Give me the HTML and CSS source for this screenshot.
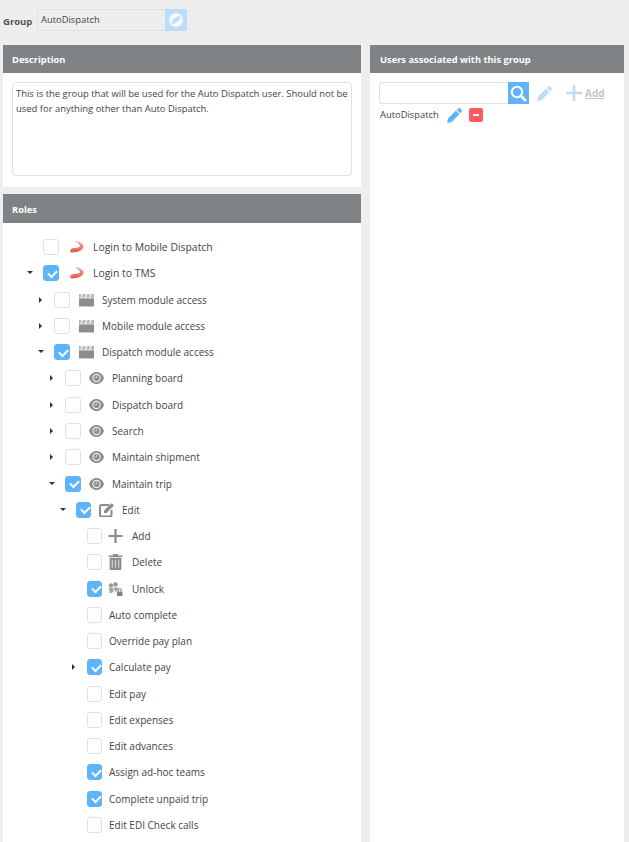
FILE: index.html
```html
<!DOCTYPE html>
<html lang="en">
<head>
<meta charset="utf-8">
<title>Group</title>
<link rel="stylesheet" href="styles.css">
</head>
<body>
<svg class="defs" width="0" height="0">
  <defs>
    <linearGradient id="g-swoosh" x1="0" y1="0" x2="0" y2="1"><stop offset="0" stop-color="#f6a79e"/><stop offset="1" stop-color="#e8554a"/></linearGradient>
    <symbol id="i-swoosh" viewBox="0 0 14 12"><path d="M5 .5C9 1 13.500 2.500 13.500 5.500 13.500 8.800 8.500 11.300 1.500 11 .8 10 1 8.200 2.500 7.500 5.500 6.300 9.800 7 10.200 5.300 10.400 3.800 8 2 5 .5z" fill="url(#g-swoosh)"/></symbol>
    <symbol id="i-clap" viewBox="0 0 14 12"><path d="M0 4.500h14V12H0z" fill="#8c8c8c"/><path d="M0 .5h14v3.300H0z" fill="#b0b0b0"/><path d="M2 .5h2L3 3.800H1zM6 .5h2L7 3.800H5zM10 .5h2l-1 3.300H9z" fill="#e6e6e6"/></symbol>
    <symbol id="i-eye" viewBox="0 0 15 12"><path d="M7.500 0C3.900 0 1.200 2.400 0 6c1.200 3.600 3.900 6 7.500 6s6.300-2.400 7.500-6C13.800 2.400 11.100 0 7.500 0z" fill="#8c8c8c"/><circle cx="7.500" cy="6" r="4.200" fill="#eee"/><circle cx="7.500" cy="6" r="3" fill="#8c8c8c"/><path d="M7.500 3.800v2.200H5.500" stroke="#ddd" fill="none" stroke-width=".8"/></symbol>
    <symbol id="i-edit" viewBox="0 0 15 14"><path d="M10 2H2.500C1.600 2 1 2.600 1 3.500v8.500c0 .9.600 1.500 1.500 1.500H11c.9 0 1.500-.6 1.500-1.500V7" fill="none" stroke="#8c8c8c" stroke-width="2"/><path d="M5 7.500 11.800.7a1 1 0 0 1 1.400 0l1.100 1.100a1 1 0 0 1 0 1.400L7.500 10H5z" fill="#8c8c8c"/></symbol>
    <symbol id="i-plus" viewBox="0 0 15 15"><path d="M6.300 0h2.400v6.300H15v2.400H8.700V15H6.300V8.700H0V6.300h6.300z" fill="currentColor"/></symbol>
    <symbol id="i-trash" viewBox="0 0 13 15"><path d="M4.500 0h4l.6 1.300H13v1.400H0V1.300h3.900zM1 3.500h11V14a1 1 0 0 1-1 1H2a1 1 0 0 1-1-1z" fill="#8c8c8c"/><path d="M3.500 5.500v7.500M6.500 5.500v7.500M9.500 5.500v7.500" stroke="#ddd" stroke-width="1"/></symbol>
    <symbol id="i-unlock" viewBox="0 0 15 14"><circle cx="3" cy="3.500" r="2.200" fill="#999"/><circle cx="7.500" cy="2.500" r="2.200" fill="#999"/><path d="M.5 6h5v3.500L4 11H2zM5.500 5.500h5L9 9.500H7z" fill="#a5a5a5"/><path d="M9 9.500h5.500V14H9z" fill="#808080"/><path d="M10.300 9.500V8a1.400 1.400 0 0 1 2.900 0v1.500" fill="none" stroke="#808080"/></symbol>
    <symbol id="i-pencil" viewBox="0 0 15 15"><path d="M10.800.8a2 2 0 0 1 2.800 0l.6.6a2 2 0 0 1 0 2.800l-1 1L9.800 1.800zM9 2.600 12.400 6l-7 7.500c-1.500 1-3.500 1.400-5.200 1.400C.3 13 .7 11 1.700 9.700z" fill="currentColor"/></symbol>
  </defs>
</svg>

<div class="group-row">
  <label class="group-label">Group</label>
  <div class="group-field">
    <span class="group-value">AutoDispatch</span>
    <span class="group-btn">
      <svg width="16" height="16" viewBox="0 0 16 16"><circle cx="8" cy="8" r="7" fill="#fff" fill-opacity=".8"/><path d="M12 4C12.500 7.500 9.500 11 4 12 3.500 8.500 6.500 5 12 4z" fill="#bddcf7"/></svg>
    </span>
  </div>
</div>

<div class="columns">
  <div class="col-left">
    <section class="panel panel-desc">
      <h2 class="panel-title">Description</h2>
      <div class="panel-body desc-body">
        <div class="desc-box">This is the group that will be used for the Auto Dispatch user. Should not be used for anything other than Auto Dispatch.</div>
      </div>
    </section>
    <section class="panel panel-roles">
      <h2 class="panel-title">Roles</h2>
      <div class="tree">
        <div class="row lvl0"><span class="arrow"></span><span class="cb"></span><svg class="ic ic-0"><use href="#i-swoosh"/></svg><span class="txt">Login to Mobile Dispatch</span></div>
        <div class="row lvl0"><span class="arrow open"></span><span class="cb on"></span><svg class="ic ic-0"><use href="#i-swoosh"/></svg><span class="txt">Login to TMS</span></div>
        <div class="row lvl1"><span class="arrow closed"></span><span class="cb"></span><svg class="ic ic-1"><use href="#i-clap"/></svg><span class="txt">System module access</span></div>
        <div class="row lvl1"><span class="arrow closed"></span><span class="cb"></span><svg class="ic ic-1"><use href="#i-clap"/></svg><span class="txt">Mobile module access</span></div>
        <div class="row lvl1"><span class="arrow open"></span><span class="cb on"></span><svg class="ic ic-1"><use href="#i-clap"/></svg><span class="txt">Dispatch module access</span></div>
        <div class="row lvl2"><span class="arrow closed"></span><span class="cb"></span><svg class="ic ic-2"><use href="#i-eye"/></svg><span class="txt">Planning board</span></div>
        <div class="row lvl2"><span class="arrow closed"></span><span class="cb"></span><svg class="ic ic-2"><use href="#i-eye"/></svg><span class="txt">Dispatch board</span></div>
        <div class="row lvl2"><span class="arrow closed"></span><span class="cb"></span><svg class="ic ic-2"><use href="#i-eye"/></svg><span class="txt">Search</span></div>
        <div class="row lvl2"><span class="arrow closed"></span><span class="cb"></span><svg class="ic ic-2"><use href="#i-eye"/></svg><span class="txt">Maintain shipment</span></div>
        <div class="row lvl2"><span class="arrow open"></span><span class="cb on"></span><svg class="ic ic-2"><use href="#i-eye"/></svg><span class="txt">Maintain trip</span></div>
        <div class="row lvl3"><span class="arrow open"></span><span class="cb on"></span><svg class="ic ic-3"><use href="#i-edit"/></svg><span class="txt">Edit</span></div>
        <div class="row lvl4"><span class="arrow"></span><span class="cb"></span><svg class="ic ic-4 ic-plus"><use href="#i-plus"/></svg><span class="txt">Add</span></div>
        <div class="row lvl4"><span class="arrow"></span><span class="cb"></span><svg class="ic ic-4 ic-tall"><use href="#i-trash"/></svg><span class="txt">Delete</span></div>
        <div class="row lvl4"><span class="arrow"></span><span class="cb on"></span><svg class="ic ic-4"><use href="#i-unlock"/></svg><span class="txt">Unlock</span></div>
        <div class="row lvl4"><span class="arrow"></span><span class="cb"></span><span class="txt plain">Auto complete</span></div>
        <div class="row lvl4"><span class="arrow"></span><span class="cb"></span><span class="txt plain">Override pay plan</span></div>
        <div class="row lvl4"><span class="arrow closed"></span><span class="cb on"></span><span class="txt plain">Calculate pay</span></div>
        <div class="row lvl4"><span class="arrow"></span><span class="cb"></span><span class="txt plain">Edit pay</span></div>
        <div class="row lvl4"><span class="arrow"></span><span class="cb"></span><span class="txt plain">Edit expenses</span></div>
        <div class="row lvl4"><span class="arrow"></span><span class="cb"></span><span class="txt plain">Edit advances</span></div>
        <div class="row lvl4"><span class="arrow"></span><span class="cb on"></span><span class="txt plain">Assign ad-hoc teams</span></div>
        <div class="row lvl4"><span class="arrow"></span><span class="cb on"></span><span class="txt plain">Complete unpaid trip</span></div>
        <div class="row lvl4"><span class="arrow"></span><span class="cb"></span><span class="txt plain">Edit EDI Check calls</span></div>
      </div>
    </section>
  </div>

  <section class="panel panel-users">
    <h2 class="panel-title">Users associated with this group</h2>
    <div class="users-body">
      <div class="search-row">
        <div class="search-box"></div>
        <span class="search-btn">
          <svg width="17" height="17" viewBox="0 0 17 17"><circle cx="7" cy="7" r="5.200" fill="none" stroke="#fff" stroke-width="2"/><path d="M11 11l5 5" stroke="#fff" stroke-width="2.600"/></svg>
        </span>
        <svg class="faded-pencil" width="15" height="15"><use href="#i-pencil"/></svg>
        <svg class="faded-plus" width="16" height="16"><use href="#i-plus"/></svg>
        <span class="add-link">Add</span>
      </div>
      <div class="user-row">
        <span class="user-name">AutoDispatch</span>
        <svg class="user-pencil" width="15" height="15"><use href="#i-pencil"/></svg>
        <span class="remove-btn"><span class="remove-bar"></span></span>
      </div>
    </div>
  </section>
</div>
</body>
</html>
```
FILE: styles.css
```css
* { box-sizing: border-box; }
html, body { height: 842px; overflow: hidden; }
body {
  margin: 0;
  background: #eeeeee;
  font-family: "Open Sans", sans-serif;
  font-size: 10px;
  color: #444;
}
.defs { position: absolute; }

.group-row {
  display: flex;
  align-items: center;
  height: 45px;
  padding: 0 0 5px 3px;
}
.group-label { font-weight: 700; font-size: 9.5px; color: #555; width: 34px; padding-top: 2px; }
.group-field { display: flex; height: 22px; }
.group-value {
  width: 128px;
  padding: 1px 3px 0;
  font-size: 9.400px;
  line-height: 18px;
  border: 1px solid #dfe0e6;
  border-right: 0;
  border-radius: 3px 0 0 3px;
  background: #eeeeee;
}
.group-btn {
  width: 22px;
  background: #bddcf7;
  display: flex;
  align-items: center;
  justify-content: center;
}

.columns { display: flex; align-items: flex-start; padding-left: 3px; }
.col-left { width: 358px; display: flex; flex-direction: column; gap: 7px; }
.panel { background: #fff; }
.panel-title {
  margin: 0;
  height: 28px;
  padding: 1px 0 0 9px;
  background: #808386;
  color: #fff;
  font-size: 9.300px;
  font-weight: 700;
  line-height: 27px;
}
.panel-desc { height: 142px; }
.desc-body { padding: 9px; }
.desc-box {
  height: 94px;
  padding: 3px 3px;
  border: 1px solid #dfe0e6;
  border-radius: 4px;
  font-size: 9.450px;
  line-height: 15.300px;
}
.panel-roles { height: 660px; }
.panel-roles .panel-title { height: 29px; line-height: 29px; }
.tree { padding-top: 11px; }
.row { display: flex; align-items: center; height: 26.270px; }
.lvl0 { padding-left: 24px; }
.lvl0 .txt { font-size: 10.400px; margin-left: 9px; }
.lvl1 { padding-left: 35px; }
.lvl2 { padding-left: 46px; }
.lvl3 { padding-left: 57px; }
.lvl4 { padding-left: 68px; }
.arrow { width: 16px; height: 6px; position: relative; flex: none; }
.arrow.open::before {
  content: "";
  position: absolute;
  left: 0;
  top: 1px;
  border-style: solid;
  border-width: 3px 3px 0;
  border-color: #333 transparent transparent;
}
.arrow.closed::before {
  content: "";
  position: absolute;
  left: 1px;
  top: 0;
  border-style: solid;
  border-width: 3px 0 3px 3px;
  border-color: transparent transparent transparent #333;
}
.cb {
  width: 16px;
  height: 16px;
  flex: none;
  border: 1px solid #dfe0e6;
  border-radius: 3px;
  background: #fff;
  position: relative;
}
.lvl3 .cb, .lvl4 .cb { width: 15px; }
.cb.on { background: #5eb4fb; border-color: #5eb4fb; }
.cb.on::after {
  content: "";
  position: absolute;
  left: 3.500px;
  top: 3.500px;
  width: 7px;
  height: 4px;
  border-left: 2px solid #fff;
  border-bottom: 2px solid #fff;
  transform: rotate(-45deg);
}
.ic { width: 15px; height: 14px; flex: none; }
.ic-tall { height: 16px; }
.ic-0 { margin-left: 10px; }
.ic-1 { margin-left: 9px; }
.ic-2 { margin-left: 8px; }
.ic-3 { margin-left: 8px; }
.ic-4 { margin-left: 6px; }
.ic-plus { color: #8c8c8c; }
.txt { margin-left: 8px; white-space: nowrap; }
.ic-4 + .txt { margin-left: 9px; }
.txt.plain { margin-left: 7px; }

.panel-users { width: 254px; height: 797px; margin-left: 9px; }
.panel-users .panel-title { padding-left: 10px; }
.users-body { padding: 9px; }
.search-row { display: flex; align-items: center; height: 22px; }
.search-box {
  width: 129px;
  height: 22px;
  border: 1px solid #dfe0e6;
  border-right: 0;
  border-radius: 3px 0 0 3px;
}
.search-btn {
  width: 21px;
  height: 22px;
  background: #5eb4fb;
  display: flex;
  align-items: center;
  justify-content: center;
}
.faded-pencil { color: #bddcf7; margin-left: 8px; }
.faded-plus { color: #bddcf7; margin-left: 14px; }
.add-link {
  margin-left: 3px;
  font-weight: 700;
  color: #c4c6c8;
  text-decoration: underline;
}
.user-row { display: flex; align-items: center; height: 20px; margin-top: 1px; }
.user-name { color: #444; font-size: 9.400px; padding: 0 0 2px 1px; }
.user-pencil { color: #5eb4fb; margin-left: 8px; }
.remove-btn {
  width: 14px;
  height: 14px;
  margin-left: 7px;
  background: #ff5a5f;
  border-radius: 2px;
  display: flex;
  align-items: center;
  justify-content: center;
}
.remove-bar { width: 6px; height: 2px; background: #fff; }
```
